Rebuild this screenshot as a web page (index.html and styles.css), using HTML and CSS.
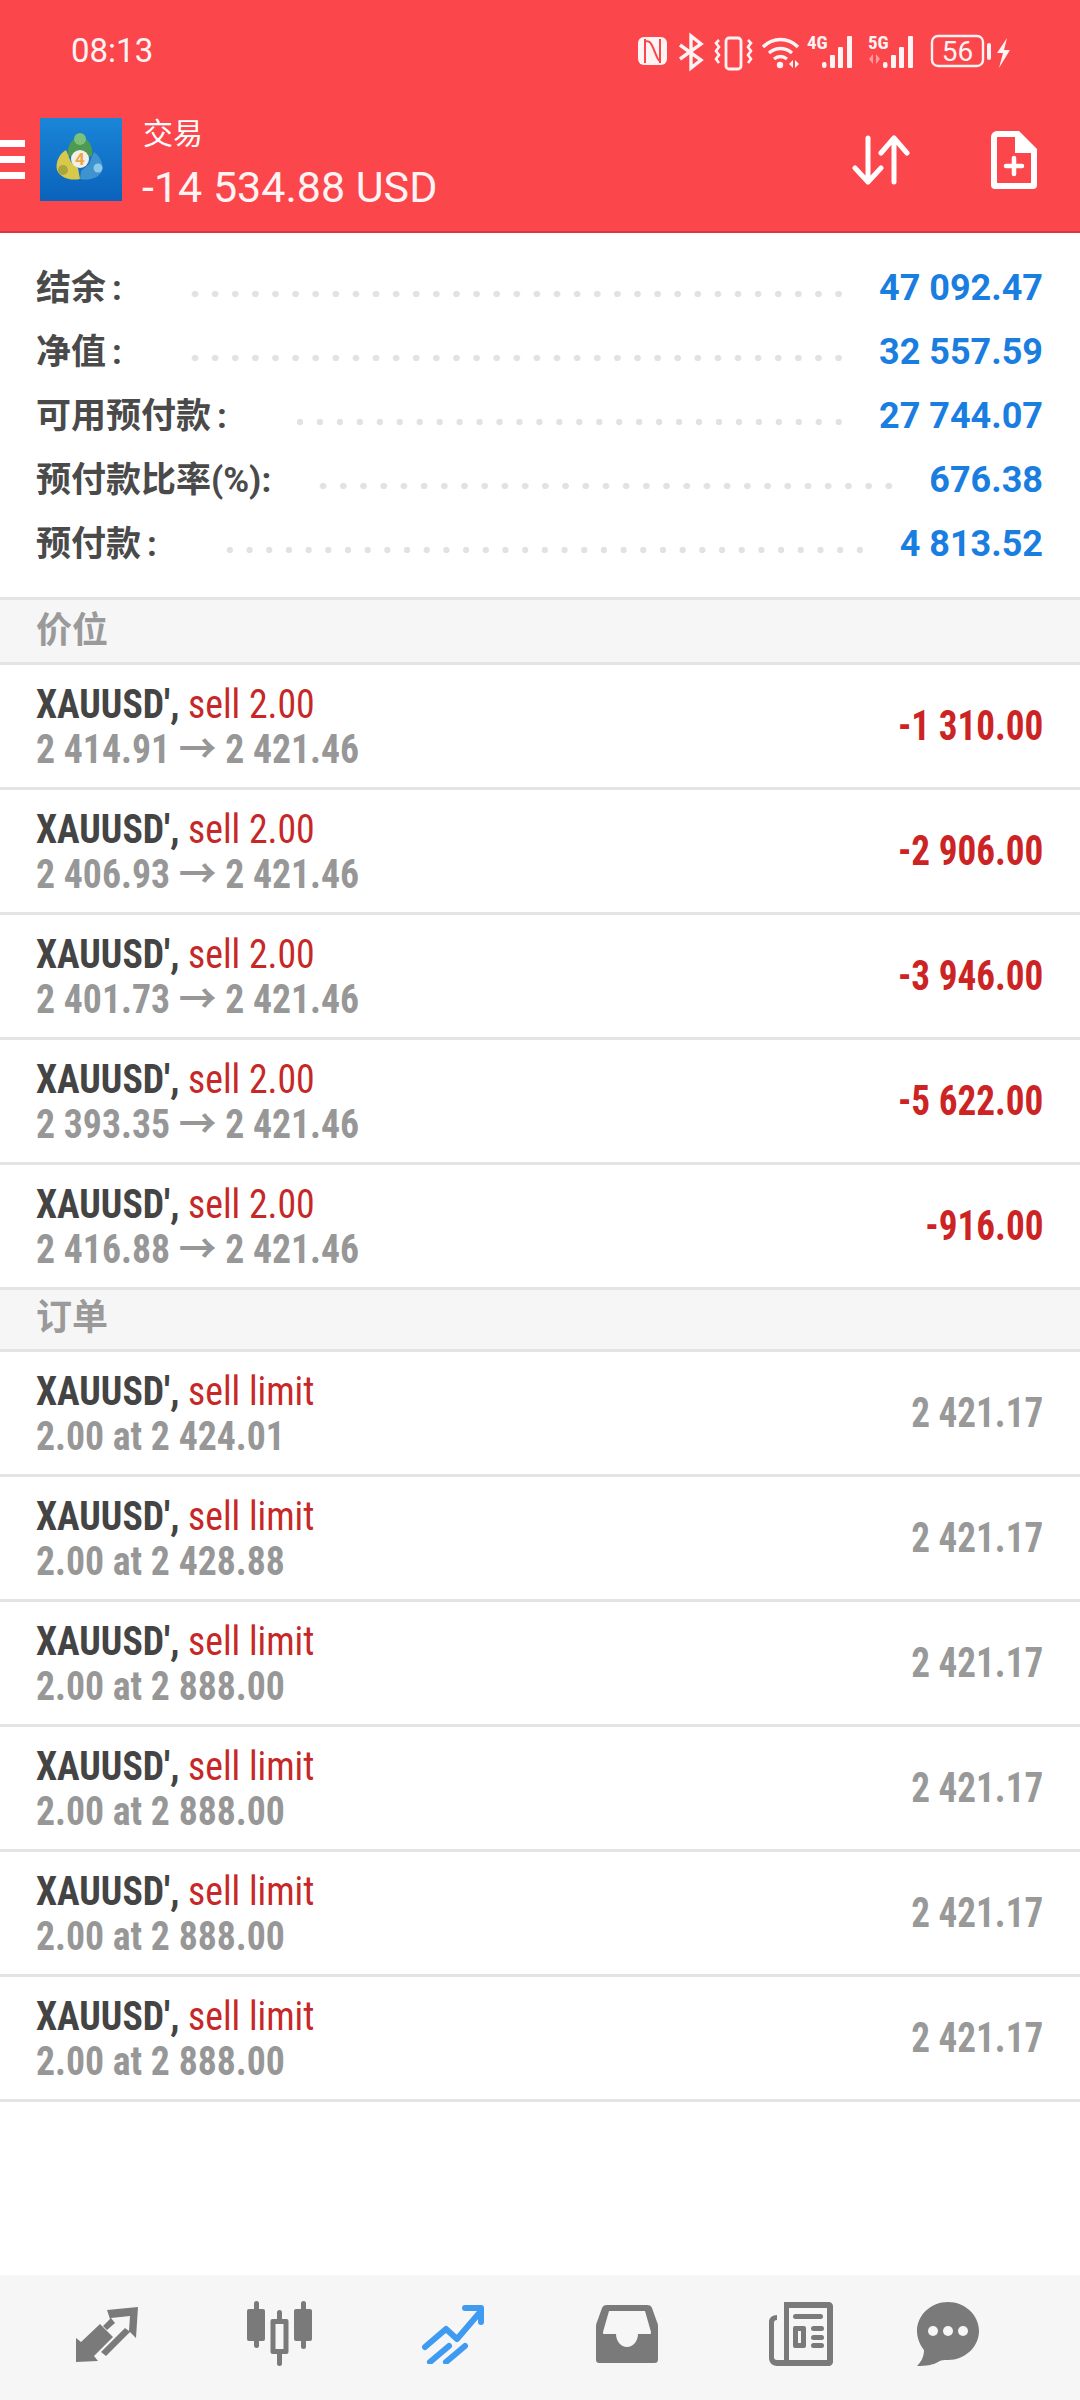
FILE: index.html
```html
<!DOCTYPE html>
<html lang="zh">

<head>
    <meta charset="UTF-8">
    <title>交易</title>
    <link rel="stylesheet" href="styles.css">
</head>

<body>
    <div class="page">
        <header class="header">
            <div class="statusbar">
                <span class="time">08:13</span>
                <svg class="status-icons" width="384" height="44" viewBox="0 0 384 44" fill="none" stroke="#fff3f3">
                    <!-- nfc -->
                    <rect x="3" y="7" width="29" height="28" rx="6" fill="#fff3f3" stroke="none" />
                    <path d="M10 9v24M25 9v24M10 11c6 0 6 2 9 9s4 11 6 11" stroke="#fb464c" stroke-width="2" />
                    <!-- bluetooth -->
                    <path d="M45 15l21 15-10 8V6l10 8-21 15" stroke-width="3.4" />
                    <!-- vibrate -->
                    <rect x="91" y="8" width="15" height="31" rx="3" stroke-width="2.8" />
                    <path d="M84 10l-3 3 3 4-3 4 3 4-3 4 3 4M113 10l3 3-3 4 3 4-3 4 3 4-3 4" stroke-width="2.6" />
                    <!-- wifi -->
                    <path d="M128 17c10-10 25-10 35 0M134 23c7-6 16-6 23 0M139 29c4-3 9-3 13 0" stroke-width="3.4" />
                    <circle cx="145" cy="35" r="3.200" fill="#fff3f3" stroke="none" />
                    <path d="M158 30l-4 4 4 4zM160 30l4 4-4 4z" fill="#fff3f3" stroke="none" />
                    <!-- 4g signal -->
                    <text class="net-label" x="172" y="19">4G</text>
                    <g fill="#fff3f3" stroke="none">
                        <rect x="187" y="32" width="4.500" height="6" rx="2" />
                        <rect x="195" y="25" width="5" height="13" rx="1" />
                        <rect x="203" y="17" width="5" height="21" rx="1" />
                        <rect x="212" y="6" width="5" height="32" rx="1" />
                    </g>
                    <!-- 5g signal -->
                    <text class="net-label" x="233" y="19">5G</text>
                    <path d="M238 24l-4 5 4 5zM241 24l4 5-4 5z" fill="#ff9a9a" stroke="none" />
                    <g fill="#fff3f3" stroke="none">
                        <rect x="248" y="32" width="4.500" height="6" rx="2" />
                        <rect x="256" y="25" width="5" height="13" rx="1" />
                        <rect x="264" y="17" width="5" height="21" rx="1" />
                        <rect x="273" y="6" width="5" height="32" rx="1" />
                    </g>
                    <!-- battery -->
                    <rect x="297" y="6" width="51" height="30" rx="6" stroke-width="2.400" />
                    <text class="batt-label" x="322.500" y="31">56</text>
                    <rect x="352" y="13" width="4" height="17" rx="2" fill="#fff3f3" stroke="none" />
                    <path d="M372 8l-10 15h6l-4 15 11-18h-6z" fill="#fff3f3" stroke="none" />
                </svg>
            </div>
            <div class="toolbar">
                <div class="burger"><i></i><i></i><i></i></div>
                <svg class="logo" width="82" height="83" viewBox="0 0 82 83">
                    <defs>
                        <linearGradient id="logoBg" x1="0" y1="0" x2="0" y2="1">
                            <stop offset="0" stop-color="#1a86d8" />
                            <stop offset="1" stop-color="#0a62bb" />
                        </linearGradient>
                    </defs>
                    <rect width="82" height="83" fill="url(#logoBg)" />
                    <path d="M40 18c8 2 14 11 12 20l-12 3-12-3c-2-9 4-18 12-20z" fill="#4f9a52" />
                    <circle cx="40" cy="21" r="6" fill="#7cc07c" />
                    <path d="M26 32c-6 3-11 12-9 20 3 8 14 11 23 9l-2-11-7-6z" fill="#d9c94a" />
                    <circle cx="23" cy="52" r="5" fill="#a8a63c" />
                    <path d="M54 34c6 4 10 12 8 19-3 7-13 10-22 8l1-8 8-7z" fill="#3f93cf" />
                    <circle cx="58" cy="50" r="4.500" fill="#8cc8ea" />
                    <circle cx="40" cy="41" r="9" fill="#f2efe8" />
                    <text class="logo-digit" x="40" y="47">4</text>
                </svg>
                <div class="titles">
                    <div class="title">交易</div>
                    <div class="profit">-14 534.88 USD</div>
                </div>
                <svg class="sort-icon" width="58" height="50" viewBox="0 0 58 50" fill="none" stroke="#fff" stroke-width="5" stroke-linecap="round" stroke-linejoin="round">
                    <path d="M16 3v44M3 33l13 14 13-14" />
                    <path d="M42 47V3M29 18L42 3l13 15" />
                </svg>
                <svg class="doc-icon" width="46" height="58" viewBox="0 0 46 58">
                    <path d="M6 0h22l18 18v36a4 4 0 0 1-4 4H4a4 4 0 0 1-4-4V6a6 6 0 0 1 6-6zm0 6v46h34V22H24V6z" fill="#fff" fill-rule="evenodd" />
                    <path d="M23 27v16M15 35h16" stroke="#fff" stroke-width="4.500" stroke-linecap="round" />
                </svg>
            </div>
        </header>

        <section class="summary">
            <div class="sum-row"><span class="sum-label">结余<i>:</i></span><span class="dots"></span><span class="sum-value">47 092.47</span></div>
            <div class="sum-row"><span class="sum-label">净值<i>:</i></span><span class="dots"></span><span class="sum-value">32 557.59</span></div>
            <div class="sum-row"><span class="sum-label">可用预付款<i>:</i></span><span class="dots"></span><span class="sum-value">27 744.07</span></div>
            <div class="sum-row"><span class="sum-label">预付款比率(%):</span><span class="dots tight"></span><span class="sum-value">676.38</span></div>
            <div class="sum-row"><span class="sum-label">预付款<i>:</i></span><span class="dots"></span><span class="sum-value">4 813.52</span></div>
        </section>

        <div class="section-head first">价位</div>

        <div class="row">
            <div class="row-text"><div class="line-a"><b>XAUUSD',</b> <span class="red">sell 2.00</span></div><div class="line-b">2 414.91 → 2 421.46</div></div>
            <div class="amount red-bold">-1 310.00</div>
        </div>
        <div class="row">
            <div class="row-text"><div class="line-a"><b>XAUUSD',</b> <span class="red">sell 2.00</span></div><div class="line-b">2 406.93 → 2 421.46</div></div>
            <div class="amount red-bold">-2 906.00</div>
        </div>
        <div class="row">
            <div class="row-text"><div class="line-a"><b>XAUUSD',</b> <span class="red">sell 2.00</span></div><div class="line-b">2 401.73 → 2 421.46</div></div>
            <div class="amount red-bold">-3 946.00</div>
        </div>
        <div class="row">
            <div class="row-text"><div class="line-a"><b>XAUUSD',</b> <span class="red">sell 2.00</span></div><div class="line-b">2 393.35 → 2 421.46</div></div>
            <div class="amount red-bold">-5 622.00</div>
        </div>
        <div class="row">
            <div class="row-text"><div class="line-a"><b>XAUUSD',</b> <span class="red">sell 2.00</span></div><div class="line-b">2 416.88 → 2 421.46</div></div>
            <div class="amount red-bold">-916.00</div>
        </div>

        <div class="section-head">订单</div>

        <div class="row">
            <div class="row-text"><div class="line-a"><b>XAUUSD',</b> <span class="red">sell limit</span></div><div class="line-b">2.00 at 2 424.01</div></div>
            <div class="amount">2 421.17</div>
        </div>
        <div class="row">
            <div class="row-text"><div class="line-a"><b>XAUUSD',</b> <span class="red">sell limit</span></div><div class="line-b">2.00 at 2 428.88</div></div>
            <div class="amount">2 421.17</div>
        </div>
        <div class="row">
            <div class="row-text"><div class="line-a"><b>XAUUSD',</b> <span class="red">sell limit</span></div><div class="line-b">2.00 at 2 888.00</div></div>
            <div class="amount">2 421.17</div>
        </div>
        <div class="row">
            <div class="row-text"><div class="line-a"><b>XAUUSD',</b> <span class="red">sell limit</span></div><div class="line-b">2.00 at 2 888.00</div></div>
            <div class="amount">2 421.17</div>
        </div>
        <div class="row">
            <div class="row-text"><div class="line-a"><b>XAUUSD',</b> <span class="red">sell limit</span></div><div class="line-b">2.00 at 2 888.00</div></div>
            <div class="amount">2 421.17</div>
        </div>
        <div class="row">
            <div class="row-text"><div class="line-a"><b>XAUUSD',</b> <span class="red">sell limit</span></div><div class="line-b">2.00 at 2 888.00</div></div>
            <div class="amount">2 421.17</div>
        </div>

        <nav class="bottom-nav">
            <svg width="62" height="56" viewBox="0 0 62 56" fill="#7a7a7a">
                <path d="M0 56V32l5 4L24 18l13 13-19 19 4 5z" />
                <path d="M31 4l31-3-2 31-6-6-24 24-5-4 24-24 4 3 1-15-19 2 4 5-8 7-4-4 7-7z" fill-rule="evenodd" />
            </svg>
            <svg width="66" height="66" viewBox="0 0 66 66" fill="#7a7a7a">
                <rect x="0" y="8" width="18" height="32" rx="2" />
                <rect x="7" y="0" width="5" height="47" rx="2.500" />
                <rect x="47" y="8" width="18" height="32" rx="2" />
                <rect x="54" y="0" width="5" height="48" rx="2.500" />
                <rect x="30" y="9" width="5" height="56" rx="2.500" />
                <rect x="23.500" y="18" width="18" height="35" rx="2" />
                <rect x="28.500" y="23" width="8" height="25" fill="#f6f6f6" />
            </svg>
            <svg width="62" height="60" viewBox="0 0 62 60" fill="none" stroke="#3f9bf2" stroke-width="6" stroke-linecap="round" stroke-linejoin="round">
                <path d="M3 43l21-18 11 10L59 7" />
                <path d="M43 4h16v14" />
                <path d="M8 58l19-16M24 58l19-16" />
            </svg>
            <svg width="62" height="58" viewBox="0 0 62 58">
                <path d="M11 0h40c3 0 4 1 5 3l5 14c1 2 1 3 1 6v31c0 3-1 4-4 4H4c-3 0-4-1-4-4V23c0-3 0-4 1-6L6 3c1-2 2-3 5-3zm2 6L7 27c0 2 0 2 2 2h11c0 7 5 13 11 13s11-6 11-13h11c2 0 2 0 2-2L49 6z" fill="#7a7a7a" fill-rule="evenodd" />
            </svg>
            <svg width="64" height="64" viewBox="0 0 64 64" fill="#7a7a7a">
                <path d="M18 0h42c2 0 4 2 4 4v56c0 2-2 4-4 4H8c-4 0-8-3-8-8V20c0-4 3-7 8-7v5c-2 0-3 1-3 3v34c0 2 1 3 3 3h7c0-1 0-55 0-58 0-2 1-4 3-4zm2 6v52h38V6z" fill-rule="evenodd" />
                <rect x="24" y="12" width="30" height="5" rx="2.500" />
                <rect x="24" y="24" width="13" height="22" rx="2" />
                <rect x="29" y="29" width="3" height="12" fill="#f6f6f6" />
                <rect x="42" y="24" width="13" height="5" rx="2.500" />
                <rect x="42" y="33" width="13" height="5" rx="2.500" />
                <rect x="42" y="41" width="13" height="5" rx="2.500" />
            </svg>
            <svg width="62" height="64" viewBox="0 0 62 64">
                <path d="M31 0c17 0 31 13 31 29S48 58 31 58c-4 0-7 0-10 2-5 3-12 4-21 4 4-4 7-9 7-16C3 43 0 36 0 29 0 13 14 0 31 0z" fill="#7a7a7a" />
                <circle cx="16" cy="29" r="5" fill="#f6f6f6" />
                <circle cx="31" cy="29" r="5" fill="#f6f6f6" />
                <circle cx="46" cy="29" r="5" fill="#f6f6f6" />
            </svg>
        </nav>
    </div>
</body>

</html>
```

FILE: styles.css
```css
* {
    box-sizing: border-box;
}

body {
    margin: 0;
    font-family: Roboto, "Noto Sans CJK SC", sans-serif;
    background-color: #fff;
}

.page {
    width: 1080px;
    height: 2400px;
    display: flex;
    flex-direction: column;
    overflow: hidden;
}

/* red header */
.header {
    height: 233px;
    background-color: #fb464c;
    border-bottom: 2px solid #d63a40;
    color: #fff;
}

.statusbar {
    height: 100px;
    display: flex;
    align-items: center;
    justify-content: space-between;
    padding-left: 71px;
    padding-right: 61px;
}

.time {
    font-size: 33px;
    color: #fff3f3;
}

.status-icons {
    margin-top: 3px;
}

.net-label {
    font-size: 19px;
    font-weight: 700;
    font-stretch: 75%;
    fill: #fff3f3;
    stroke: none;
}

.batt-label {
    font-size: 28px;
    fill: #fff3f3;
    stroke: none;
    text-anchor: middle;
}

.toolbar {
    height: 131px;
    display: flex;
    align-items: center;
    padding-bottom: 12px;
}

.burger {
    width: 25px;
    display: flex;
    flex-direction: column;
    gap: 9px;
    margin-right: 15px;
}

.burger i {
    display: block;
    height: 7px;
    background-color: #fff;
}

.logo {
    flex: none;
}

.logo-digit {
    font-size: 17px;
    font-weight: 700;
    fill: #eda64a;
    text-anchor: middle;
}

.titles {
    flex: 1;
    margin-left: 21px;
    margin-top: 11px;
}

.title {
    font-size: 30px;
    line-height: 44px;
}

.profit {
    font-size: 43px;
    line-height: 62px;
    margin-left: -1px;
    color: #fff3f3;
}

.sort-icon {
    margin-right: 81px;
}

.doc-icon {
    margin-right: 43px;
}

/* account summary */
.summary {
    height: 364px;
    padding-top: 22px;
    padding-right: 37px;
    padding-left: 36px;
}

.sum-row {
    height: 64px;
    display: flex;
    align-items: center;
}

.sum-label {
    font-size: 35px;
    font-weight: 700;
    color: #4a4a4a;
    margin-bottom: 6px;
}

.sum-label i {
    font-style: normal;
    margin-left: 6px;
}

.dots {
    flex: 1;
    height: 10px;
    margin: 14px 30px 0 63px;
    background: radial-gradient(circle, #e2e2e2 3px, transparent 3.5px) left center / 20px 10px round;
}

.dots.tight {
    margin-left: 42px;
}

.sum-value {
    font-size: 36px;
    font-weight: 700;
    color: #1a7de0;
    margin-top: 2px;
}

/* position and order lists */
.section-head {
    height: 62px;
    padding-left: 36px;
    padding-bottom: 12px;
    display: flex;
    align-items: center;
    font-size: 36px;
    font-weight: 700;
    color: #9a9a9a;
    background-color: #f6f6f6;
    border-bottom: 3px solid #e4e4e4;
}

.section-head.first {
    height: 68px;
    padding-bottom: 8px;
    border-top: 3px solid #e4e4e4;
}

.row {
    height: 125px;
    flex: none;
    padding: 1px 37px 0 36px;
    display: flex;
    align-items: center;
    justify-content: space-between;
    border-bottom: 3px solid #e4e4e4;
    font-stretch: 75%;
}

.row-text {
    transform: scaleX(.943);
    transform-origin: left center;
}

.line-a,
.line-b {
    font-size: 40px;
    line-height: 45px;
    white-space: nowrap;
}

.line-a b {
    color: #444;
}

.red {
    color: #c62828;
}

.line-b {
    font-weight: 700;
    color: #979797;
}

.amount {
    font-size: 42px;
    font-weight: 700;
    color: #999;
    margin-bottom: 2px;
    transform: scaleX(.885);
    transform-origin: right center;
}

.red-bold {
    color: #cc2424;
}

.bottom-nav {
    margin-top: auto;
    height: 125px;
    display: grid;
    grid-template-columns: 174px 172px 174px 174px 174px 120px;
    align-items: center;
    justify-items: center;
    padding-left: 20px;
    padding-bottom: 8px;
    background-color: #f6f6f6;
}
```
